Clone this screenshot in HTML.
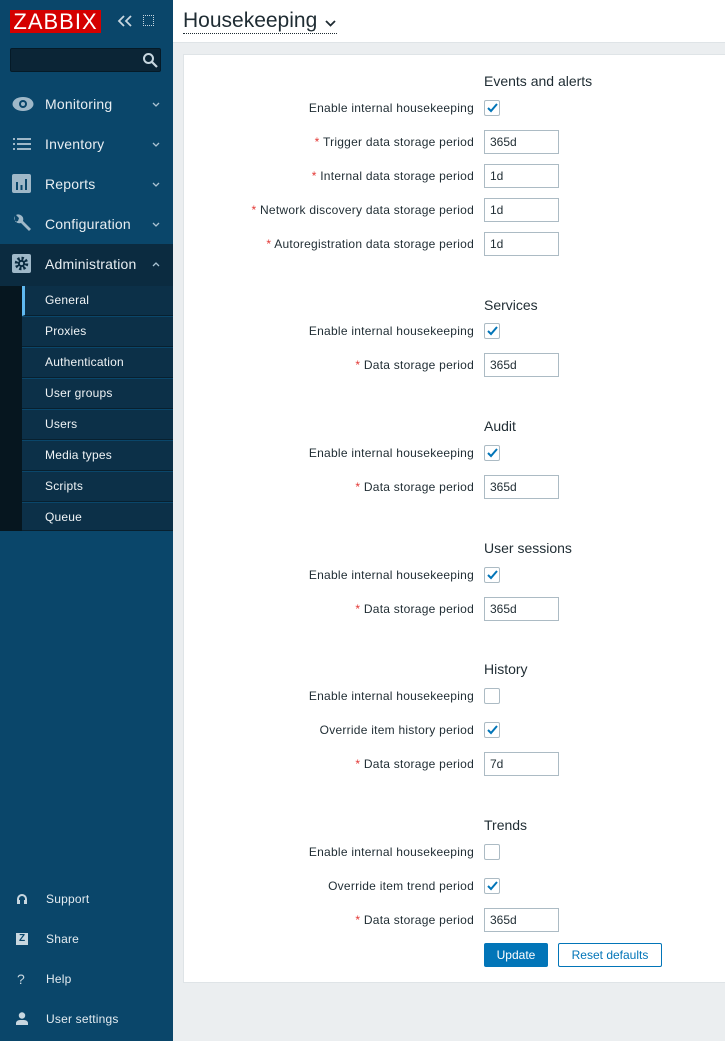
<!DOCTYPE html>
<html><head><meta charset="utf-8"><style>
*{box-sizing:border-box;margin:0;padding:0}
body{width:725px;height:1041px;overflow:hidden;background:#ebeef0;font-family:"Liberation Sans",Arial,sans-serif;position:relative;color:#1f2c33}
.sb{position:absolute;left:0;top:0;width:173px;height:1041px;background:#0a466a}
.logo{position:absolute;left:10px;top:10px;width:91px;height:23px;background:#d40000;color:#fff;font-size:22px;line-height:24px;text-align:center;letter-spacing:1px}
.srch{position:absolute;left:10px;top:48px;width:151px;height:24px;background:#0b2536;border:1px solid #051a27;border-radius:2px}
.mi{position:absolute;left:45px;color:#e8eef2;font-size:14px;letter-spacing:0.2px}
.car{position:absolute;left:152px}
.ic{position:absolute;left:12px}
.sub{position:absolute;left:22px;width:151px;height:30px;background:#0c3048;border-bottom:1px solid #08202f;color:#f0f4f6;font-size:12px;line-height:28px;padding-left:23px;letter-spacing:0.2px}
.fi{position:absolute;left:46px;color:#e4ecf1;font-size:12px;letter-spacing:0.2px}
.hdr{position:absolute;left:173px;top:0;width:552px;height:43px;background:#fff;border-bottom:1px solid #dfe4e7}
.panel{position:absolute;left:183px;top:54px;width:542px;height:929px;background:#fff;border:1px solid #dfe4e7;border-right:none}
.l{position:absolute;right:251px;font-size:12px;white-space:nowrap;color:#1f2c33;letter-spacing:0.25px}
.l b{color:#e33734;font-weight:normal}
.h{position:absolute;left:484px;font-size:14px;color:#1f2c33}
.i{position:absolute;left:484px;width:75px;height:24px;border:1px solid #acbbc4;font-size:12px;line-height:23px;padding-left:5px}
.c{position:absolute;left:484px;width:16px;height:16px;border:1px solid #acbbc4;border-radius:2px}
.c svg{position:absolute;left:2px;top:2px}
</style></head><body>
<div class="sb">
<div class="logo">ZABBIX</div>
<svg style="position:absolute;left:117px;top:15px" width="16" height="12"><path d="M7 1L2 6l5 5M14 1L9 6l5 5" stroke="#c8d7e0" stroke-width="1.8" fill="none"/></svg>
<div style="position:absolute;left:143px;top:15px;width:11px;height:11px;border:1px dotted #c8d7e0"></div>
<div class="srch"><svg style="position:absolute;left:131px;top:3px" width="16" height="16"><circle cx="6.5" cy="6.5" r="4.5" stroke="#c8d7e0" stroke-width="2" fill="none"/><path d="M10 10l5 5" stroke="#c8d7e0" stroke-width="2.2"/></svg></div>
<svg class="ic" style="top:95px" width="22" height="18"><ellipse cx="11" cy="9" rx="10.5" ry="7" fill="#9fb8c8"/><circle cx="11" cy="9" r="4" fill="#0a466a"/><circle cx="11" cy="9" r="2" fill="#9fb8c8"/></svg>
<div class="mi" style="top:96px">Monitoring</div><svg class="car" style="top:102px" width="8" height="5"><path d="M1 1l3 3 3-3" stroke="#aac3d3" stroke-width="1.3" fill="none"/></svg>
<svg class="ic" style="top:137px" width="20" height="14"><g fill="#9fb8c8"><rect x="1" y="1" width="2" height="2"/><rect x="5" y="1" width="14" height="2"/><rect x="1" y="6" width="2" height="2"/><rect x="5" y="6" width="14" height="2"/><rect x="1" y="11" width="2" height="2"/><rect x="5" y="11" width="14" height="2"/></g></svg>
<div class="mi" style="top:136px">Inventory</div><svg class="car" style="top:142px" width="8" height="5"><path d="M1 1l3 3 3-3" stroke="#aac3d3" stroke-width="1.3" fill="none"/></svg>
<svg class="ic" style="top:174px" width="19" height="19"><rect width="19" height="19" rx="2" fill="#9fb8c8"/><g fill="#0a466a"><rect x="4" y="8" width="2" height="8"/><rect x="8.5" y="11" width="2" height="5"/><rect x="13" y="5" width="2" height="11"/></g></svg>
<div class="mi" style="top:176px">Reports</div><svg class="car" style="top:182px" width="8" height="5"><path d="M1 1l3 3 3-3" stroke="#aac3d3" stroke-width="1.3" fill="none"/></svg>
<svg class="ic" style="top:213px" width="20" height="20"><path d="M3 3 a5 5 0 0 0 6 7 l8 8 2-2-8-8 a5 5 0 0 0-7-6 l3 3-1 3-3 1z" fill="#9fb8c8"/></svg>
<div class="mi" style="top:216px">Configuration</div><svg class="car" style="top:222px" width="8" height="5"><path d="M1 1l3 3 3-3" stroke="#aac3d3" stroke-width="1.3" fill="none"/></svg>
<div style="position:absolute;left:0;top:244px;width:173px;height:42px;background:#0b2b40"></div>
<svg class="ic" style="top:254px" width="19" height="19"><rect width="19" height="19" rx="2" fill="#9fb8c8"/><circle cx="9.5" cy="9.5" r="5" fill="none" stroke="#0b2b40" stroke-width="3.5" stroke-dasharray="2.2 1.7"/><circle cx="9.5" cy="9.5" r="3.6" fill="#0b2b40"/><circle cx="9.5" cy="9.5" r="1.6" fill="#9fb8c8"/></svg>
<div class="mi" style="top:256px">Administration</div><svg class="car" style="top:262px" width="8" height="5"><path d="M1 4l3-3 3 3" stroke="#aac3d3" stroke-width="1.3" fill="none"/></svg>
<div style="position:absolute;left:0;top:286px;width:22px;height:245px;background:#06161f"></div>
<div class="sub" style="top:286px;border-left:3px solid #5fb8f0;padding-left:20px">General</div>
<div class="sub" style="top:317px">Proxies</div>
<div class="sub" style="top:348px">Authentication</div>
<div class="sub" style="top:379px">User groups</div>
<div class="sub" style="top:410px">Users</div>
<div class="sub" style="top:441px">Media types</div>
<div class="sub" style="top:472px">Scripts</div>
<div class="sub" style="top:503px;height:28px">Queue</div>
<svg style="position:absolute;left:16px;top:893px" width="12" height="13"><path d="M2 8V6a4 4 0 0 1 8 0v2" stroke="#c8d7e0" stroke-width="2" fill="none"/><rect x="1" y="7" width="3" height="4" fill="#c8d7e0"/><rect x="8" y="7" width="3" height="4" fill="#c8d7e0"/></svg>
<div class="fi" style="top:892px">Support</div>
<div style="position:absolute;left:16px;top:933px;width:12px;height:12px;background:#c8d7e0;color:#0a466a;font-size:10px;font-weight:bold;line-height:12px;text-align:center">Z</div>
<div class="fi" style="top:932px">Share</div>
<div style="position:absolute;left:17px;top:971px;color:#c8d7e0;font-size:14px">?</div>
<div class="fi" style="top:972px">Help</div>
<svg style="position:absolute;left:16px;top:1012px" width="12" height="13"><circle cx="6" cy="3.5" r="3.2" fill="#c8d7e0"/><path d="M0 13v-2a4 3 0 0 1 4-3h4a4 3 0 0 1 4 3v2z" fill="#c8d7e0"/></svg>
<div class="fi" style="top:1012px">User settings</div>
</div>
<div class="hdr"><div style="position:absolute;left:10px;top:9px;font-size:21px;color:#1f2c33;border-bottom:1px dotted #1f2c33;line-height:24px;padding-right:20px">Housekeeping<svg style="position:absolute;right:1px;top:11px" width="11" height="7"><path d="M1 1l4.5 4.5L10 1" stroke="#1f2c33" stroke-width="1.8" fill="none"/></svg></div></div>
<div class="panel"></div>

<div class="h" style="top:73px">Events and alerts</div>
<div class="l" style="top:101px">Enable internal housekeeping</div><div class="c" style="top:100px"><svg width="11" height="10"><path d="M1 5l3 3 6-7" stroke="#0275b8" stroke-width="2" fill="none"/></svg></div>
<div class="l" style="top:135px"><b>*</b> Trigger data storage period</div><div class="i" style="top:130px">365d</div>
<div class="l" style="top:169px"><b>*</b> Internal data storage period</div><div class="i" style="top:164px">1d</div>
<div class="l" style="top:203px"><b>*</b> Network discovery data storage period</div><div class="i" style="top:198px">1d</div>
<div class="l" style="top:237px"><b>*</b> Autoregistration data storage period</div><div class="i" style="top:232px">1d</div>

<div class="h" style="top:297px">Services</div>
<div class="l" style="top:324px">Enable internal housekeeping</div><div class="c" style="top:323px"><svg width="11" height="10"><path d="M1 5l3 3 6-7" stroke="#0275b8" stroke-width="2" fill="none"/></svg></div>
<div class="l" style="top:358px"><b>*</b> Data storage period</div><div class="i" style="top:353px">365d</div>

<div class="h" style="top:418px">Audit</div>
<div class="l" style="top:446px">Enable internal housekeeping</div><div class="c" style="top:445px"><svg width="11" height="10"><path d="M1 5l3 3 6-7" stroke="#0275b8" stroke-width="2" fill="none"/></svg></div>
<div class="l" style="top:480px"><b>*</b> Data storage period</div><div class="i" style="top:475px">365d</div>

<div class="h" style="top:540px">User sessions</div>
<div class="l" style="top:568px">Enable internal housekeeping</div><div class="c" style="top:567px"><svg width="11" height="10"><path d="M1 5l3 3 6-7" stroke="#0275b8" stroke-width="2" fill="none"/></svg></div>
<div class="l" style="top:602px"><b>*</b> Data storage period</div><div class="i" style="top:597px">365d</div>

<div class="h" style="top:661px">History</div>
<div class="l" style="top:689px">Enable internal housekeeping</div><div class="c" style="top:688px"></div>
<div class="l" style="top:723px">Override item history period</div><div class="c" style="top:722px"><svg width="11" height="10"><path d="M1 5l3 3 6-7" stroke="#0275b8" stroke-width="2" fill="none"/></svg></div>
<div class="l" style="top:757px"><b>*</b> Data storage period</div><div class="i" style="top:752px">7d</div>

<div class="h" style="top:817px">Trends</div>
<div class="l" style="top:845px">Enable internal housekeeping</div><div class="c" style="top:844px"></div>
<div class="l" style="top:879px">Override item trend period</div><div class="c" style="top:878px"><svg width="11" height="10"><path d="M1 5l3 3 6-7" stroke="#0275b8" stroke-width="2" fill="none"/></svg></div>
<div class="l" style="top:913px"><b>*</b> Data storage period</div><div class="i" style="top:908px">365d</div>

<div style="position:absolute;left:484px;top:943px;width:64px;height:24px;background:#0275b8;border-radius:2px;color:#fff;font-size:12px;line-height:24px;text-align:center">Update</div>
<div style="position:absolute;left:558px;top:943px;width:104px;height:24px;border:1px solid #0275b8;border-radius:2px;color:#0275b8;font-size:12px;line-height:22px;text-align:center">Reset defaults</div>
</body></html>
